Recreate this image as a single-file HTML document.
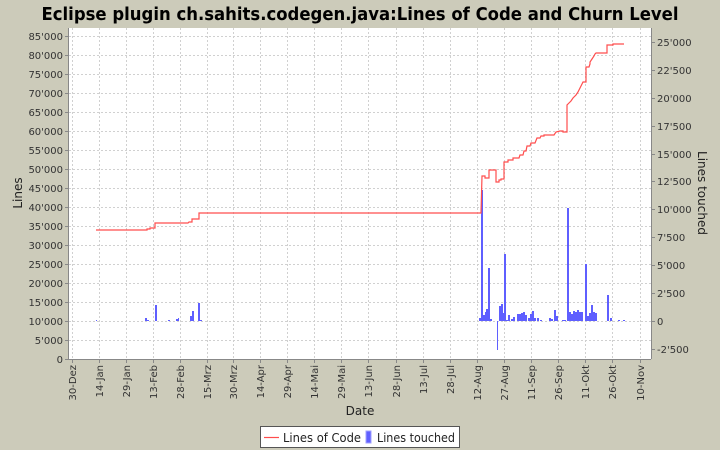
<!DOCTYPE html>
<html><head><meta charset="utf-8"><style>
html,body{margin:0;padding:0;background:#cccbba;}
svg{display:block;font-family:"DejaVu Sans","Liberation Sans",sans-serif;}
</style></head><body>
<svg width="720" height="450" viewBox="0 0 720 450" xmlns="http://www.w3.org/2000/svg">
<rect width="720" height="450" fill="#cccbba"/>
<text x="360" y="20" text-anchor="middle" font-size="18" font-weight="bold" textLength="637" lengthAdjust="spacingAndGlyphs" fill="#000">Eclipse plugin ch.sahits.codegen.java:Lines of Code and Churn Level</text>
<rect x="69" y="28" width="582" height="331" fill="#fff"/>
<g stroke="#d0d0d0" stroke-width="1" stroke-dasharray="2,2" fill="none">
<path d="M72.5 28V359M99.5 28V359M126.5 28V359M153.5 28V359M180.5 28V359M207.5 28V359M233.5 28V359M260.5 28V359M287.5 28V359M314.5 28V359M341.5 28V359M368.5 28V359M396.5 28V359M423.5 28V359M450.5 28V359M477.5 28V359M504.5 28V359M531.5 28V359M558.5 28V359M585.5 28V359M612.5 28V359M640.5 28V359"/>
<path d="M69 340.5H651M69 321.5H651M69 302.5H651M69 283.5H651M69 264.5H651M69 245.5H651M69 226.5H651M69 207.5H651M69 188.5H651M69 169.5H651M69 150.5H651M69 131.5H651M69 112.5H651M69 93.5H651M69 74.5H651M69 55.5H651M69 36.5H651"/>
</g>
<g fill="#5f5fff">
<rect x="96" y="320" width="1" height="1"/>
<rect x="145" y="318" width="2" height="3"/>
<rect x="147" y="320" width="2" height="1"/>
<rect x="155" y="305" width="2" height="16"/>
<rect x="168" y="320" width="2" height="1"/>
<rect x="176" y="319" width="2" height="2"/>
<rect x="178" y="318" width="1" height="3"/>
<rect x="190" y="316" width="2" height="5"/>
<rect x="192" y="311" width="2" height="10"/>
<rect x="198" y="303" width="2" height="18"/>
<rect x="200" y="320" width="2" height="1"/>
<rect x="479" y="318" width="2" height="3"/>
<rect x="481" y="190" width="2" height="131"/>
<rect x="483" y="315" width="2" height="6"/>
<rect x="485" y="312" width="2" height="9"/>
<rect x="486" y="309" width="2" height="12"/>
<rect x="488" y="268" width="2" height="53"/>
<rect x="490" y="319" width="2" height="2"/>
<rect x="497" y="321" width="1" height="29"/>
<rect x="499" y="306" width="2" height="15"/>
<rect x="501" y="304" width="2" height="17"/>
<rect x="502" y="313" width="2" height="8"/>
<rect x="504" y="254" width="2" height="67"/>
<rect x="506" y="320" width="2" height="1"/>
<rect x="508" y="315" width="2" height="6"/>
<rect x="511" y="319" width="2" height="2"/>
<rect x="513" y="317" width="2" height="4"/>
<rect x="517" y="314" width="2" height="7"/>
<rect x="519" y="314" width="2" height="7"/>
<rect x="521" y="313" width="2" height="8"/>
<rect x="523" y="312" width="2" height="9"/>
<rect x="525" y="315" width="2" height="6"/>
<rect x="528" y="318" width="2" height="3"/>
<rect x="530" y="314" width="2" height="7"/>
<rect x="532" y="311" width="2" height="10"/>
<rect x="534" y="318" width="2" height="3"/>
<rect x="537" y="318" width="2" height="3"/>
<rect x="540" y="320" width="2" height="1"/>
<rect x="549" y="318" width="2" height="3"/>
<rect x="551" y="319" width="2" height="2"/>
<rect x="554" y="310" width="2" height="11"/>
<rect x="556" y="316" width="2" height="5"/>
<rect x="562" y="320" width="2" height="1"/>
<rect x="564" y="320" width="2" height="1"/>
<rect x="567" y="208" width="2" height="113"/>
<rect x="569" y="312" width="2" height="9"/>
<rect x="571" y="314" width="2" height="7"/>
<rect x="573" y="311" width="2" height="10"/>
<rect x="575" y="312" width="2" height="9"/>
<rect x="577" y="310" width="2" height="11"/>
<rect x="579" y="312" width="2" height="9"/>
<rect x="581" y="312" width="2" height="9"/>
<rect x="585" y="264" width="2" height="57"/>
<rect x="587" y="316" width="2" height="5"/>
<rect x="589" y="313" width="2" height="8"/>
<rect x="591" y="305" width="2" height="16"/>
<rect x="593" y="312" width="2" height="9"/>
<rect x="595" y="313" width="2" height="8"/>
<rect x="607" y="295" width="2" height="26"/>
<rect x="610" y="318" width="2" height="3"/>
<rect x="618" y="320" width="2" height="1"/>
<rect x="623" y="320" width="2" height="1"/>
</g>
<polyline fill="none" stroke="#ff4d4d" stroke-width="1.2" points="96,230 147,230 147,229 150,229 150,228 155,228 155,223 188,223 189,222 192,222 192,219 197,219 199,219 199,213 481,213 482,176 485,176 485,178 489,178 489,170 496,170 496,182 499,182 499,180 501,180 501,179 504,179 504,162 508,162 508,160 513,160 513,158 519,158 520,155 523,155 524,151 526,151 527,146 530,146 531,143 535,143 537,138 540,138 541,136 544,136 544,135 554,135 556,132 560,131 563,131 563,132 567,132 567,105 569,103 571,101 573,98 576,95 578,92 580,88 582,84 583,82 586,82 586,67 589,67 590,64 590,62 592,59 594,56 595,54 596,53 607,53 607,45 613,45 613,44 624,44"/>
<g stroke="#888" stroke-width="1" fill="none">
<path d="M68.5 28V359.5H651"/>
<path d="M651.5 28V359"/>
<path d="M65 340.5h4M65 321.5h4M65 302.5h4M65 283.5h4M65 264.5h4M65 245.5h4M65 226.5h4M65 207.5h4M65 188.5h4M65 169.5h4M65 150.5h4M65 131.5h4M65 112.5h4M65 93.5h4M65 74.5h4M65 55.5h4M65 36.5h4M65 359.5h4"/>
<path d="M651 42.5h4M651 70.5h4M651 98.5h4M651 126.5h4M651 154.5h4M651 181.5h4M651 209.5h4M651 237.5h4M651 265.5h4M651 293.5h4M651 321.5h4M651 349.5h4"/>
<path d="M72.5 359v4M99.5 359v4M126.5 359v4M153.5 359v4M180.5 359v4M207.5 359v4M233.5 359v4M260.5 359v4M287.5 359v4M314.5 359v4M341.5 359v4M368.5 359v4M396.5 359v4M423.5 359v4M450.5 359v4M477.5 359v4M504.5 359v4M531.5 359v4M558.5 359v4M585.5 359v4M612.5 359v4M640.5 359v4"/>
</g>
<g font-size="10" fill="#333" text-anchor="end">
<text x="63" y="40">85'000</text><text x="63" y="59">80'000</text><text x="63" y="78">75'000</text><text x="63" y="97">70'000</text><text x="63" y="116">65'000</text><text x="63" y="135">60'000</text><text x="63" y="154">55'000</text><text x="63" y="173">50'000</text><text x="63" y="192">45'000</text><text x="63" y="211">40'000</text><text x="63" y="230">35'000</text><text x="63" y="249">30'000</text><text x="63" y="268">25'000</text><text x="63" y="287">20'000</text><text x="63" y="306">15'000</text><text x="63" y="325">10'000</text><text x="63" y="344">5'000</text><text x="63" y="363">0</text>
</g>
<g font-size="10" fill="#333">
<text x="657" y="46">25'000</text><text x="657" y="74">22'500</text><text x="657" y="102">20'000</text><text x="657" y="130">17'500</text><text x="657" y="158">15'000</text><text x="657" y="185">12'500</text><text x="657" y="213">10'000</text><text x="657" y="241">7'500</text><text x="657" y="269">5'000</text><text x="657" y="297">2'500</text><text x="657" y="325">0</text><text x="657" y="353">-2'500</text>
</g>
<g font-size="10" fill="#333" text-anchor="end">
<text transform="translate(76,365) rotate(-90)">30-Dez</text>
<text transform="translate(103,365) rotate(-90)">14-Jan</text>
<text transform="translate(130,365) rotate(-90)">29-Jan</text>
<text transform="translate(157,365) rotate(-90)">13-Feb</text>
<text transform="translate(184,365) rotate(-90)">28-Feb</text>
<text transform="translate(211,365) rotate(-90)">15-Mrz</text>
<text transform="translate(237,365) rotate(-90)">30-Mrz</text>
<text transform="translate(264,365) rotate(-90)">14-Apr</text>
<text transform="translate(291,365) rotate(-90)">29-Apr</text>
<text transform="translate(318,365) rotate(-90)">14-Mai</text>
<text transform="translate(345,365) rotate(-90)">29-Mai</text>
<text transform="translate(372,365) rotate(-90)">13-Jun</text>
<text transform="translate(400,365) rotate(-90)">28-Jun</text>
<text transform="translate(427,365) rotate(-90)">13-Jul</text>
<text transform="translate(454,365) rotate(-90)">28-Jul</text>
<text transform="translate(481,365) rotate(-90)">12-Aug</text>
<text transform="translate(508,365) rotate(-90)">27-Aug</text>
<text transform="translate(535,365) rotate(-90)">11-Sep</text>
<text transform="translate(562,365) rotate(-90)">26-Sep</text>
<text transform="translate(589,365) rotate(-90)">11-Okt</text>
<text transform="translate(616,365) rotate(-90)">26-Okt</text>
<text transform="translate(644,365) rotate(-90)">10-Nov</text>
</g>
<text x="360" y="415" font-size="12" text-anchor="middle" fill="#222">Date</text>
<text transform="translate(22,193) rotate(-90)" font-size="12" text-anchor="middle" fill="#222">Lines</text>
<text transform="translate(698,193) rotate(90)" font-size="12" text-anchor="middle" fill="#222">Lines touched</text>
<rect x="260.5" y="426.5" width="199" height="21" fill="#fff" stroke="#555"/>
<line x1="264" y1="437.5" x2="279" y2="437.5" stroke="#ff4d4d" stroke-width="1.2"/>
<text x="283" y="442" font-size="12" fill="#222" textLength="78" lengthAdjust="spacingAndGlyphs">Lines of Code</text>
<rect x="366" y="431" width="5" height="12" fill="#5f5fff" stroke="#a0a0ff"/>
<text x="377" y="442" font-size="12" fill="#222" textLength="78" lengthAdjust="spacingAndGlyphs">Lines touched</text>
</svg>
</body></html>
